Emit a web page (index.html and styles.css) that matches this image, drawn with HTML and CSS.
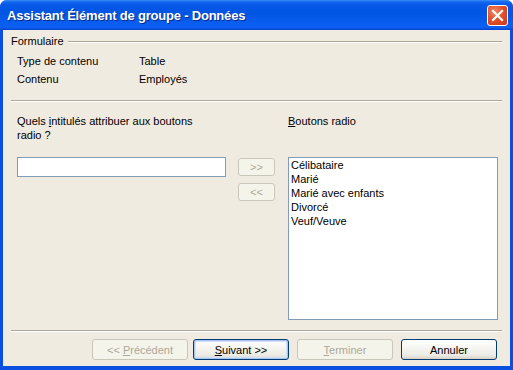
FILE: index.html
```html
<!DOCTYPE html>
<html lang="fr">
<head>
  <meta charset="UTF-8">
  <meta name="viewport" content="width=device-width, initial-scale=1.0">
  <title>Assistant Élément de groupe - Données</title>
  <link rel="stylesheet" href="styles.css">
</head>
<body>
  <div class="window">
    <div class="titlebar">
      <span class="title">Assistant Élément de groupe - Données</span>
      <button class="close" aria-label="Fermer">
        <svg viewBox="0 0 21 21" width="21" height="21">
          <path d="M6 6 L15 15 M15 6 L6 15" stroke="#fff" stroke-width="2.2" stroke-linecap="square"/>
        </svg>
      </button>
    </div>

    <div class="client">
      <div class="group-head">
        <span>Formulaire</span>
        <span class="line"></span>
      </div>

      <div class="info">
        <span>Type de contenu</span><span>Table</span>
        <span>Contenu</span><span>Employés</span>
      </div>

      <div class="sep"></div>

      <div class="main">
        <label class="question">Quels <u>i</u>ntitulés attribuer aux boutons<br>radio ?</label>
        <span></span>
        <label class="list-label"><u>B</u>outons radio</label>

        <div><input class="field" type="text"></div>
        <div class="move">
          <button class="small" disabled>&gt;&gt;</button>
          <button class="small" disabled>&lt;&lt;</button>
        </div>
        <ul class="listbox">
          <li>Célibataire</li>
          <li>Marié</li>
          <li>Marié avec enfants</li>
          <li>Divorcé</li>
          <li>Veuf/Veuve</li>
        </ul>
      </div>

      <div class="sep sep-bottom"></div>

      <div class="footer">
        <button class="btn" disabled>&lt;&lt; <u>P</u>récédent</button>
        <button class="btn default"><u>S</u>uivant &gt;&gt;</button>
        <button class="btn gap" disabled><u>T</u>erminer</button>
        <button class="btn gap">Annuler</button>
      </div>
    </div>
  </div>
</body>
</html>
```

FILE: styles.css
```css
* {
  margin: 0;
  padding: 0;
  box-sizing: border-box;
}

body {
  background: #ffffff;
  font-family: "Liberation Sans", Arial, sans-serif;
  font-size: 11px;
  line-height: 14px;
  color: #000000;
}

.window {
  width: 513px;
  height: 370px;
  display: flex;
  flex-direction: column;
  background: #0a4fe0;
  border-radius: 7px 7px 0 0;
  overflow: hidden;
}

/* title bar */
.titlebar {
  height: 30px;
  display: flex;
  align-items: center;
  justify-content: space-between;
  padding: 0 5px 0 7px;
  background: linear-gradient(#3d8cf8 0, #1268ef 2px, #0758e6 5px, #0055e3 45%, #0a5ef0 80%, #0d5ff0 92%, #0040cc 100%);
}

.title {
  color: #ffffff;
  font-weight: bold;
  font-size: 13px;
  letter-spacing: -0.2px;
  text-shadow: 1px 1px 0 #0a2a8c;
  padding-top: 1px;
}

.close {
  width: 21px;
  height: 21px;
  border: 1px solid #ffffff;
  border-radius: 3px;
  background: radial-gradient(circle at 35% 30%, #f08a6a 0, #e2512a 45%, #c8381a 100%);
  display: flex;
  align-items: center;
  justify-content: center;
}

.close svg {
  display: block;
  margin: -1px;
}

/* client area */
.client {
  flex: 1;
  margin: 0 3px 4px 3px;
  background: #f0ebe1;
  padding: 4px 8px 0 8px;
}

.group-head {
  display: flex;
  align-items: center;
  gap: 4px;
}

.group-head .line {
  flex: 1;
  height: 2px;
  border-top: 1px solid #aca899;
  border-bottom: 1px solid #ffffff;
  margin-top: 1px;
}

.info {
  display: grid;
  grid-template-columns: 122px auto;
  row-gap: 4px;
  padding-left: 6px;
  margin-top: 6px;
}

.sep {
  height: 2px;
  border-top: 1px solid #aca899;
  border-bottom: 1px solid #ffffff;
  margin-top: 14px;
}

.sep-bottom {
  margin-top: 10px;
}

/* main area */
.main {
  display: grid;
  grid-template-columns: 221px 50px 210px;
  grid-template-rows: 28px auto;
  row-gap: 15px;
  padding-left: 6px;
  margin-top: 12px;
}

.field {
  display: block;
  width: 209px;
  height: 20px;
  border: 1px solid #7f9db9;
  background: #ffffff;
  font: inherit;
  outline: none;
}

.move {
  display: flex;
  flex-direction: column;
  gap: 7px;
  padding-top: 1px;
}

.small {
  width: 37px;
  height: 18px;
  border: 1px solid #c9c7ba;
  border-radius: 3px;
  background: #f5f4ea;
  color: #aca899;
  font-family: "Liberation Sans", Arial, sans-serif;
  font-size: 11px;
}

.listbox {
  list-style: none;
  width: 210px;
  height: 163px;
  border: 1px solid #7f9db9;
  background: #ffffff;
  padding: 0 2px;
}

/* footer buttons */
.footer {
  display: flex;
  justify-content: flex-end;
  gap: 5px;
  padding-right: 5px;
  margin-top: 7px;
}

.btn {
  width: 96px;
  height: 21px;
  border: 1px solid #003c74;
  border-radius: 3px;
  background: linear-gradient(#ffffff 0, #f6f5f0 40%, #ecebe5 80%, #d8d2c6 100%);
  font-family: "Liberation Sans", Arial, sans-serif;
  font-size: 11px;
  color: #000000;
}

.btn.gap {
  margin-left: 3px;
}

.btn:disabled {
  border-color: #c9c7ba;
  background: #f5f4ea;
  color: #aca899;
}

.btn.default {
  box-shadow: inset 0 0 0 1px #a8c4f0, inset 0 0 0 2px #d2e0f8;
}
```
